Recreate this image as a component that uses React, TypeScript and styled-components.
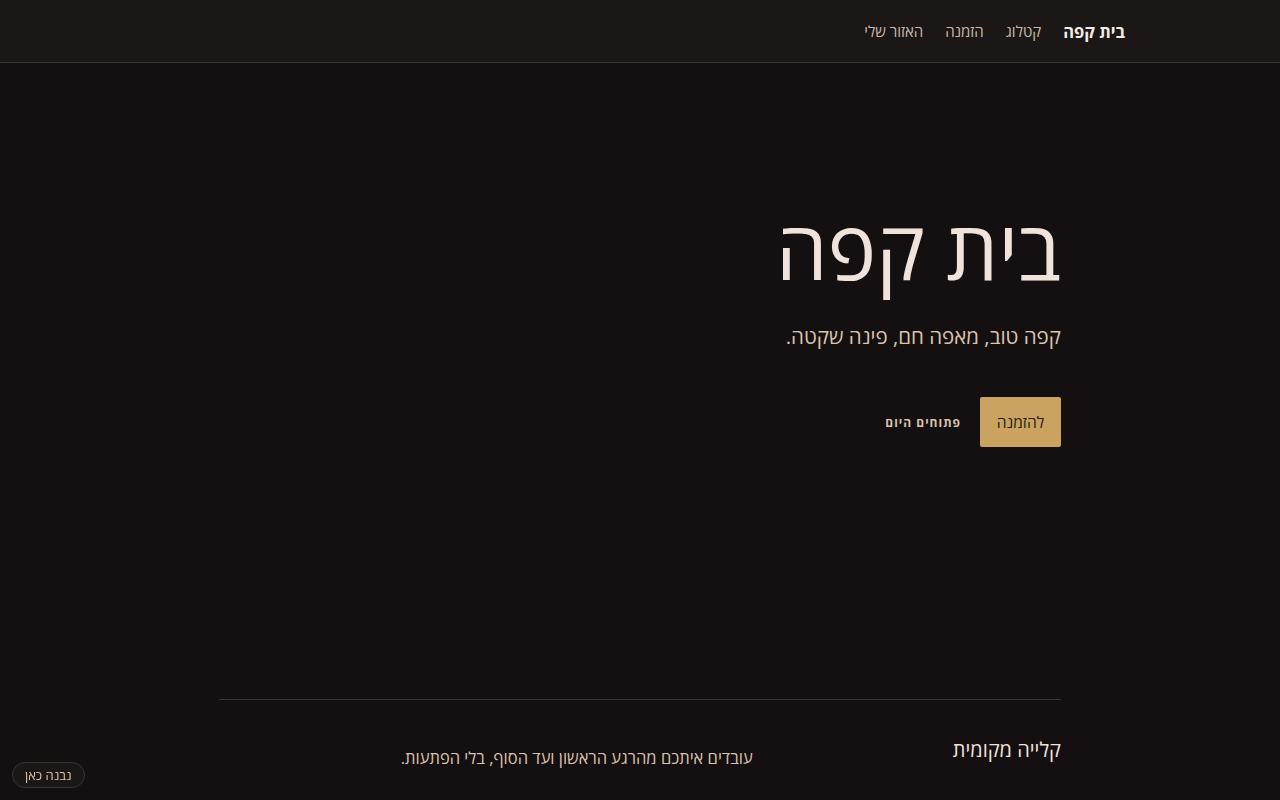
import styled, { createGlobalStyle } from 'styled-components'

const GlobalStyle = createGlobalStyle`
  html, body {
    margin: 0;
    padding: 0;
    background: #141011;
    color: #eee2da;
    font-family: "Open Sans", "Noto Sans", "DejaVu Sans", sans-serif;
  }
  * { box-sizing: border-box; }
`

const Header = styled.header`
  height: 63px;
  background: #1b1716;
  border-bottom: 1px solid #3d3532;
  display: flex;
  align-items: center;
  padding: 0 155px;
`

const Nav = styled.nav`
  display: flex;
  align-items: center;
  gap: 22px;
`

const NavLink = styled.a<{ $brand?: boolean }>`
  font-size: ${(p) => (p.$brand ? '16.5px' : '15px')};
  font-weight: ${(p) => (p.$brand ? 700 : 400)};
  color: ${(p) => (p.$brand ? '#f4ebe4' : '#cdb8a8')};
  text-decoration: none;
`

const Main = styled.main`
  width: 842px;
  margin: 0 auto;
`

const Hero = styled.section`
  height: 637px;
  display: flex;
  flex-direction: column;
  align-items: flex-start;
  padding-top: 140px;
  border-bottom: 1px solid #3d3532;
`

const Title = styled.h1`
  margin: 0;
  font-size: 82px;
  font-weight: 400;
  line-height: 1.1;
  color: #efe3dc;
`

const Subtitle = styled.p`
  margin: 29px 0 0;
  font-size: 20.5px;
  font-weight: 500;
  color: #dcc3ad;
`

const Actions = styled.div`
  display: flex;
  align-items: center;
  gap: 19px;
  margin-top: 47px;
`

const PrimaryButton = styled.button`
  height: 50px;
  width: 81px;
  padding: 0;
  background: #c9a35f;
  color: #2a1d14;
  border: none;
  border-radius: 2px;
  font-family: inherit;
  font-size: 15.5px;
`

const GhostButton = styled.button`
  background: none;
  border: none;
  padding: 0;
  color: #d9c2ae;
  font-family: inherit;
  font-size: 12px;
  font-weight: 700;
  letter-spacing: 1px;
`

const Feature = styled.section`
  display: flex;
  align-items: flex-start;
  padding-top: 36px;
  gap: 200px;
`

const FeatureTitle = styled.h2`
  margin: 0;
  font-size: 20px;
  font-weight: 500;
  color: #efe3dc;
`

const FeatureText = styled.p`
  margin: 0;
  padding-top: 10px;
  font-size: 16.5px;
  color: #d9c2ae;
`

const Badge = styled.div`
  position: fixed;
  left: 12px;
  bottom: 12px;
  height: 26px;
  padding: 0 12px;
  display: flex;
  align-items: center;
  border: 1px solid #3d3532;
  border-radius: 13px;
  background: #1b1716;
  color: #dcc3ad;
  font-size: 13px;
`

export default function App() {
  return (
    <div dir="rtl">
      <GlobalStyle />
      <Header>
        <Nav>
          <NavLink $brand>בית קפה</NavLink>
          <NavLink>קטלוג</NavLink>
          <NavLink>הזמנה</NavLink>
          <NavLink>האזור שלי</NavLink>
        </Nav>
      </Header>
      <Main>
        <Hero>
          <Title>בית קפה</Title>
          <Subtitle>קפה טוב, מאפה חם, פינה שקטה.</Subtitle>
          <Actions>
            <PrimaryButton>להזמנה</PrimaryButton>
            <GhostButton>פתוחים היום</GhostButton>
          </Actions>
        </Hero>
        <Feature>
          <FeatureTitle>קלייה מקומית</FeatureTitle>
          <FeatureText>עובדים איתכם מהרגע הראשון ועד הסוף, בלי הפתעות.</FeatureText>
        </Feature>
      </Main>
      <Badge>נבנה כאן</Badge>
    </div>
  )
}
